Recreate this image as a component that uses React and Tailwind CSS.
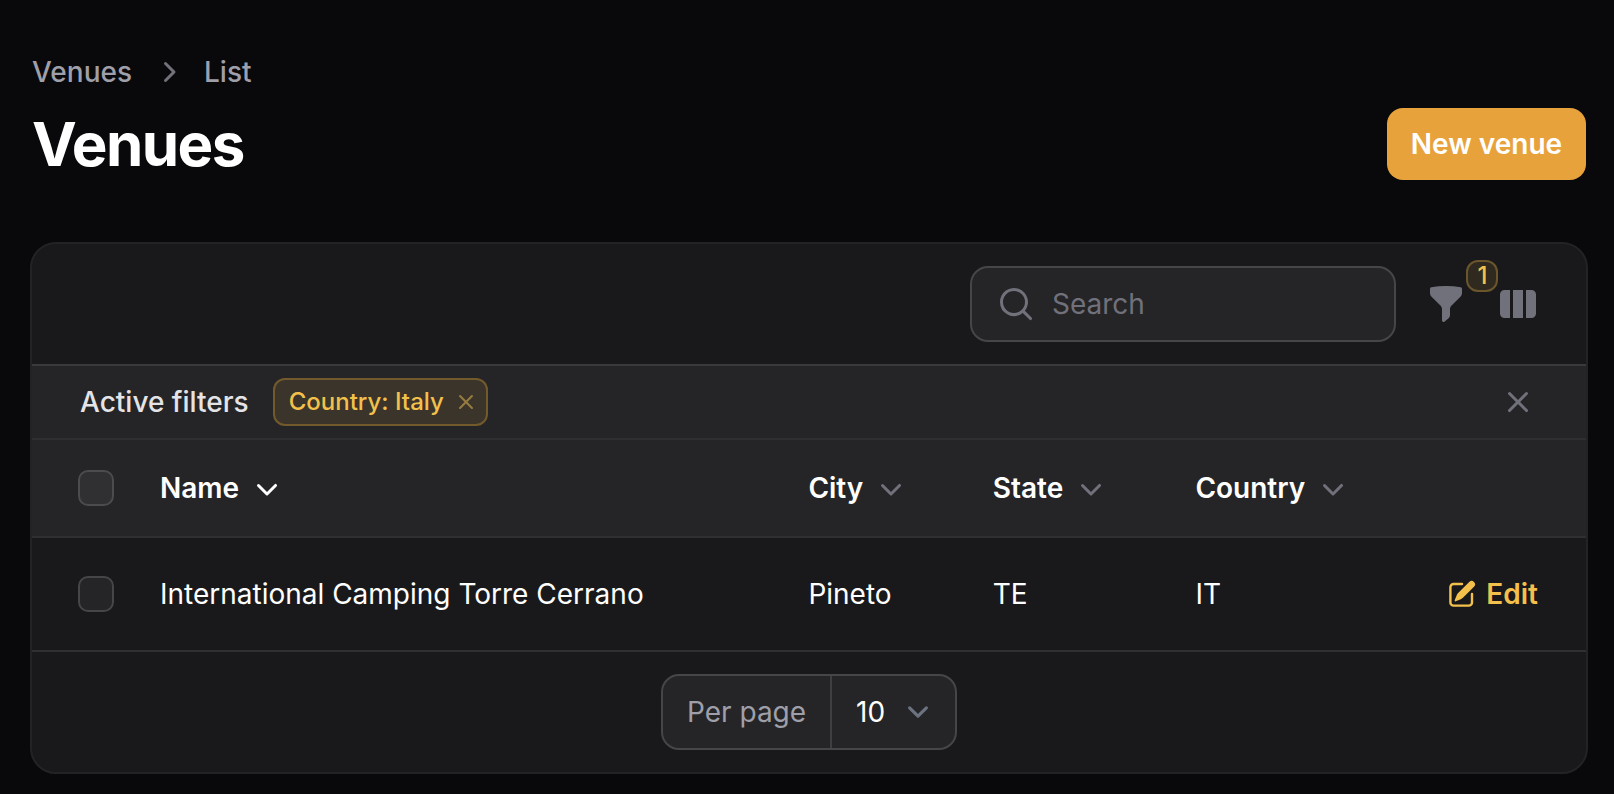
const icons = {
  chevronRight:
    'M8.22 5.22a.75.75 0 0 1 1.06 0l4.25 4.25a.75.75 0 0 1 0 1.06l-4.25 4.25a.75.75 0 0 1-1.06-1.06L11.94 10 8.22 6.28a.75.75 0 0 1 0-1.06Z',
  chevronDown:
    'M5.22 8.22a.75.75 0 0 1 1.06 0L10 11.94l3.72-3.72a.75.75 0 1 1 1.06 1.06l-4.25 4.25a.75.75 0 0 1-1.06 0L5.22 9.28a.75.75 0 0 1 0-1.06Z',
  search:
    'M9 3.5a5.5 5.5 0 100 11 5.5 5.5 0 000-11zM2 9a7 7 0 1112.452 4.391l3.328 3.329a.75.75 0 11-1.06 1.06l-3.329-3.328A7 7 0 012 9z',
  funnel:
    'M2.628 1.601C5.028 1.206 7.49 1 10 1s4.973.206 7.372.601a.75.75 0 01.628.74v2.288a2.25 2.25 0 01-.659 1.59l-4.682 4.683a2.25 2.25 0 00-.659 1.59v3.037c0 .684-.31 1.33-.844 1.757l-1.937 1.55A.75.75 0 018 18.25v-5.757a2.25 2.25 0 00-.659-1.591L2.659 6.22A2.25 2.25 0 012 4.629V2.34a.75.75 0 01.628-.74z',
  columns:
    'M14 17h2.75A2.25 2.25 0 0019 14.75v-9.5A2.25 2.25 0 0016.75 3H14v14zM12.5 3h-5v14h5V3zM3.25 3H6v14H3.25A2.25 2.25 0 011 14.75v-9.5A2.25 2.25 0 013.25 3z',
  close:
    'M6.28 5.22a.75.75 0 00-1.06 1.06L8.94 10l-3.72 3.72a.75.75 0 101.06 1.06L10 11.06l3.72 3.72a.75.75 0 101.06-1.06L11.06 10l3.72-3.72a.75.75 0 00-1.06-1.06L10 8.94 6.28 5.22z',
  edit:
    'M5.433 13.917l1.262-3.155A4 4 0 017.58 9.42l6.92-6.918a2.121 2.121 0 013 3l-6.92 6.918c-.383.383-.84.685-1.343.886l-3.154 1.262a.5.5 0 01-.65-.65zM3.5 5.75c0-.69.56-1.25 1.25-1.25H10A.75.75 0 0010 3H4.75A2.75 2.75 0 002 5.75v9.5A2.75 2.75 0 004.75 18h9.5A2.75 2.75 0 0017 15.25V10a.75.75 0 00-1.5 0v5.25c0 .69-.56 1.25-1.25 1.25h-9.5c-.69 0-1.25-.56-1.25-1.25v-9.5z',
};

function Icon({ name, className = '' }) {
  return (
    <svg viewBox="0 0 20 20" fill="currentColor" aria-hidden="true" className={`shrink-0 ${className}`}>
      <path fillRule="evenodd" clipRule="evenodd" d={icons[name]} />
    </svg>
  );
}

function Checkbox({ label, className = '' }) {
  return (
    <button
      role="checkbox"
      aria-checked="false"
      aria-label={label}
      className={`block size-9 rounded-[10px] border-2 ${className}`}
    />
  );
}

const grid = 'grid grid-cols-[82px_648.4px_184.4px_202.6px_1fr_auto] items-center pl-[46px] pr-12';

function HeaderCell({ children, active }) {
  return (
    <button className="flex items-center gap-2 text-left font-semibold text-white">
      {children}
      <Icon name="chevronDown" className={active ? 'size-10 text-white' : 'size-10 text-zinc-500'} />
    </button>
  );
}

export default function App() {
  return (
    <div className="h-[794px] w-full overflow-hidden bg-[#09090b] px-[30px] pt-[52px] font-['Inter',sans-serif] text-[28px] leading-10 text-white">
      <header className="flex w-[1556px] items-end justify-between pl-0.5">
        <div>
          <nav className="flex items-center gap-4 font-medium text-zinc-400">
            <a>Venues</a>
            <Icon name="chevronRight" className="size-10 text-zinc-500" />
            <a>List</a>
          </nav>
          <h1 className="mt-4 text-[60px] font-bold leading-[72px] tracking-tight">Venues</h1>
        </div>
        <button className="h-[72px] w-[199px] rounded-2xl bg-[#e8a23c] font-semibold text-white">New venue</button>
      </header>

      <section className="mt-[62px] w-[1558px] overflow-hidden rounded-[26px] border-2 border-[#232325] bg-[#19191b]">
        <div className="flex h-[120px] items-center justify-end pr-12">
          <label className="flex h-[76px] w-[426px] items-center gap-4 rounded-[18px] border-2 border-[#464648] bg-[#252527] px-6">
            <Icon name="search" className="size-10 text-zinc-500" />
            <input
              placeholder="Search"
              className="h-10 w-full min-w-0 bg-transparent outline-none placeholder:text-zinc-500"
            />
          </label>
          <button aria-label="Filter" className="relative ml-[30px] text-zinc-500">
            <Icon name="funnel" className="size-10" />
            <span className="absolute -top-6 left-10 flex size-8 items-center justify-center rounded-xl border-2 border-[#6b562c] bg-[#2f2920] pl-px text-2xl font-medium leading-8 text-[#f3c14b]">
              1
            </span>
          </button>
          <button aria-label="Toggle columns" className="ml-8 text-zinc-500">
            <Icon name="columns" className="size-10" />
          </button>
        </div>

        <div className="flex h-[76px] items-center border-y-2 border-t-[#3a3a3c] border-b-[#2f2f31] bg-[#252527] pl-12 pr-12">
          <span className="font-medium text-zinc-200">Active filters</span>
          <span className="ml-6 flex h-12 items-center rounded-xl border-2 border-[#735a2c] bg-[#3a342a] pl-3.5 pr-1.5 text-2xl font-medium text-[#f3c14b]">
            Country: Italy
            <Icon name="close" className="ml-2 size-7 text-[#967b40]" />
          </span>
          <button aria-label="Remove all filters" className="ml-auto text-zinc-500">
            <Icon name="close" className="size-10" />
          </button>
        </div>

        <div className={`${grid} h-[98px] border-b-2 border-[#2f2f31] bg-[#252527]`}>
          <Checkbox label="Select all" className="border-[#4c4c4e] bg-[#303032]" />
          <HeaderCell active>Name</HeaderCell>
          <HeaderCell>City</HeaderCell>
          <HeaderCell>State</HeaderCell>
          <HeaderCell>Country</HeaderCell>
        </div>

        <div className={`${grid} h-[114px] border-b-2 border-[#303032]`}>
          <Checkbox label="Select row" className="border-[#464648] bg-[#252527]" />
          <span>International Camping Torre Cerrano</span>
          <span>Pineto</span>
          <span>TE</span>
          <span>IT</span>
          <a className="flex items-center gap-2 font-semibold text-[#f3c14b]">
            <Icon name="edit" className="size-8" />
            Edit
          </a>
        </div>

        <footer className="flex h-[120px] items-center justify-center">
          <div className="flex h-[76px] w-[296px] rounded-[18px] border-2 border-[#464648] bg-[#252527]">
            <span className="flex w-[169px] items-center border-r-2 border-[#3f3f41] pl-6 text-zinc-400">Per page</span>
            <button className="flex flex-1 items-center justify-between pl-6 pr-4">
              10
              <svg viewBox="0 0 20 20" fill="none" className="size-[42px]" aria-hidden="true">
                <path
                  d="M6 8l4 4 4-4"
                  stroke="#6b7280"
                  strokeWidth="1.5"
                  strokeLinecap="round"
                  strokeLinejoin="round"
                />
              </svg>
            </button>
          </div>
        </footer>
      </section>
    </div>
  );
}
